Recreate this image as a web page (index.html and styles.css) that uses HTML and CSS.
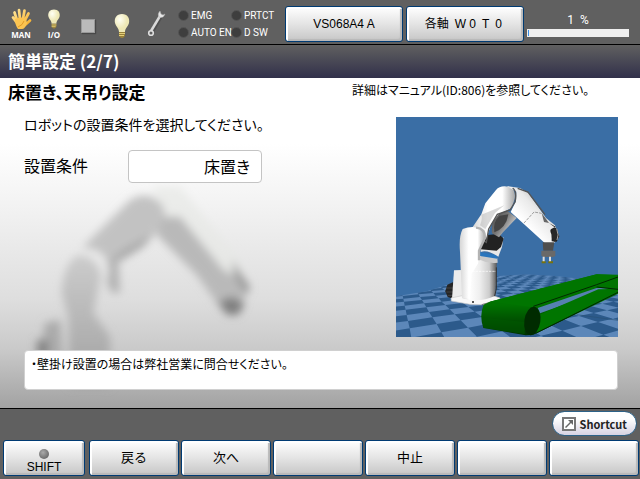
FILE: index.html
```html
<!DOCTYPE html>
<html lang="ja">
<head>
<meta charset="utf-8">
<title>簡単設定</title>
<link rel="stylesheet" href="styles.css">
</head>
<body>
<header class="status">
  <div class="tools">
    <div class="tool">
      <svg width="22" height="22" viewBox="0 0 22 22" aria-hidden="true">
        <defs><linearGradient id="skin" x2="1" y2="1"><stop stop-color="#ffe79b"/><stop offset="1" stop-color="#f7ae2a"/></linearGradient></defs>
        <g stroke="url(#skin)" stroke-width="2.7" stroke-linecap="round" fill="none"><path d="M7 12 4.5 4.500M10 11 9 2M13 11 14.500 2.500M15 12 18.500 5.500M15 17 20 12.500M7 15 3 9.500"/></g>
        <path d="M5 11Q11 8 16 11L17 15Q15 21 12 21H8Q5 17 5 11Z" fill="#fbc451"/>
        <path d="M8 19Q13 17 14 13" fill="none" stroke="#e29a25"/>
      </svg>
      <span>MAN</span>
    </div>
    <div class="tool">
      <svg width="16" height="22" viewBox="0 0 20 26" aria-hidden="true">
        <defs><radialGradient id="glass" cx=".35" cy=".3"><stop stop-color="#fffff4"/><stop offset="1" stop-color="#eee8b5"/></radialGradient></defs>
        <g id="bulb"><path d="M10 1C4.500 1 2 5 3 10C4 14 7 15 7 19H13C13 15 16 14 17 10C18 5 15.500 1 10 1Z" fill="url(#glass)"/><path d="M7 19H13V23L11 25H9L7 23Z" fill="#97803a"/><path d="M7 20.500H13M7 22.500H12" stroke="#e4cf7a"/></g>
      </svg>
      <span>I/O</span>
    </div>
    <div class="stop"></div>
    <svg class="lamp" width="22" height="26" viewBox="0 0 20 26" aria-hidden="true"><use href="#bulb"/></svg>
    <svg class="wrench" width="20" height="28" viewBox="0 0 20 28" aria-hidden="true">
      <path d="M5 22 14 6" stroke="#383838" stroke-width="4" opacity=".4"/>
      <path d="M4 21 13 6" stroke="#d9d9d9" stroke-width="2.500"/>
      <path d="M13 1Q10 4 12 7Q16 9 18 4L16 5 14 4Z" fill="#e6e6e6" stroke="#aaa" stroke-width=".5"/>
      <circle cx="4" cy="23" r="2.300" fill="none" stroke="#dedede" stroke-width="1.600"/>
    </svg>
  </div>
  <ul class="signals">
    <li>EMG</li><li>PRTCT</li><li>AUTO EN</li><li>D SW</li>
  </ul>
  <button class="key mode">VS068A4 A</button>
  <button class="key mode">各軸&ensp;W<span class="wide">0</span><span class="wide">T</span><span class="wide">0</span></button>
  <div class="speed">
    <label for="speed">1&ensp;%</label>
    <progress id="speed" value="1" max="100"></progress>
  </div>
</header>
<h1>簡単設定 (2/7)</h1>
<main>
  <svg class="backdrop" width="300" height="240" viewBox="0 0 900 720" aria-hidden="true">
    <defs>
      <filter id="soft"><feGaussianBlur stdDeviation="12"/></filter>
      <linearGradient id="shade" x2="0" y2="1"><stop stop-color="#cdcdcd"/><stop offset="1" stop-color="#a0a0a0"/></linearGradient>
    </defs>
    <g filter="url(#soft)">
      <path d="M455 20 540 20 710 230 745 310 700 370 520 150Z" fill="#e7e8e6" opacity=".7"/>
      <path d="M250 200 390 60Q450 25 490 80L500 130 440 180 350 250 345 340 310 300Z" fill="#c2c2c2"/>
      <path d="M465 160 380 205 330 240 365 240 430 200Z" fill="#a5a5a5"/>
      <path d="M470 165 490 110 540 110 670 270 745 310 735 345 720 395 665 390 590 285Z" fill="#b9b9b9"/>
      <path d="M655 365 695 350 735 370 715 405 680 405Z" fill="#808080"/>
      <path d="M695 240 750 320 740 345 705 290Z" fill="#979797"/>
      <path d="M320 245 355 240 360 340 330 335Z" fill="#b3b3b3"/>
      <path d="M245 220Q310 230 300 300L280 400 330 470 330 620H210L205 410 185 340Q190 240 245 220Z" fill="url(#shade)"/>
      <path d="M240 205Q330 200 325 285L310 310Q300 230 240 225Z" fill="#e9e9e9"/>
      <path d="M135 430 180 420 190 600 110 600Z" fill="#aaa"/>
      <path d="M110 480H145V530H110Z" fill="#858585"/>
    </g>
  </svg>
  <section class="setup">
    <div class="form">
      <h2>床置き、天吊り設定</h2>
      <p class="prompt">ロボットの設置条件を選択してください。</p>
      <div class="field">
        <label for="mount">設置条件</label>
        <input id="mount" type="text" value="床置き" readonly>
      </div>
    </div>
    <div class="guide">
      <p>詳細はマニュアル(ID:806)を参照してください。</p>
      <svg class="scene" width="222" height="220" viewBox="18 15 666 660" role="img" aria-label="床置きのロボット">
        <defs>
          <clipPath id="ground"><path d="M18 553 110 538 215 505 320 492 410 487 500 492 570 500 684 493V675H18Z"/></clipPath>
          <linearGradient id="col"><stop stop-color="#c4c4c4"/><stop offset=".2" stop-color="#fff"/><stop offset=".5" stop-color="#efefef"/><stop offset=".78" stop-color="#ccc"/><stop offset="1" stop-color="#555"/></linearGradient>
          <linearGradient id="upper"><stop stop-color="#d5d5d5"/><stop offset=".35" stop-color="#fff"/><stop offset=".7" stop-color="#fff"/><stop offset="1" stop-color="#a6a6a6"/></linearGradient>
          <linearGradient id="dark" x2="1" y2=".7"><stop stop-color="#444"/><stop offset=".5" stop-color="#777"/><stop offset="1" stop-color="#eee"/></linearGradient>
          <linearGradient id="fore" x1="1" y1="0" x2="0" y2="1"><stop stop-color="#777"/><stop offset=".42" stop-color="#e9e9e9"/><stop offset=".65" stop-color="#fff"/></linearGradient>
          <linearGradient id="belt" x2="0" y2="1"><stop stop-color="#007500"/><stop offset=".5" stop-color="#007200"/><stop offset="1" stop-color="#002f00"/></linearGradient>
        </defs>
        <path d="M18 15H684V675H18Z" fill="#3a6ea5"/>
        <g clip-path="url(#ground)"><path d="M18 480H684V675H18Z" fill="#5c87b9"/><path id="tiles" fill="#2c5a8b"/></g>
        <path d="M560 608 684 625" stroke="#285277" stroke-width="2"/>
        <path d="M190 510 172 518 166 538 173 555 190 560Z" fill="#252525"/>
        <path d="M169 528H190M169 540H190M173 550H190" stroke="#555" stroke-width="2"/>
        <path d="M192 475 216 474V561H186Z" fill="#ececec"/>
        <path d="M183 558 216 551 300 548 330 558 326 565 275 578 240 577 184 567Z" fill="#f8f8f8" stroke="#ccc" stroke-width="2"/>
        <circle cx="249" cy="570" r="3" fill="#222"/><path d="M275 578 328 564" stroke="#777" stroke-width="3"/>
        <path d="M216 425Q270 418 321 442L316 551Q265 574 216 558Z" fill="url(#col)"/>
        <path d="M270 443Q265 428 288 428L322 438 323 452Q295 456 270 443Z" fill="#c9c9c9"/>
        <path d="M268 420 322 430V440L270 432Z" fill="#2875bd"/>
        <path d="M272 408 320 413 341 374 336 405 325 434Q292 412 272 420Z" fill="#e8e8e8"/>
        <path d="M271 412 288 370 326 365 341 380 333 405 320 416Z" fill="#222"/>
        <path d="M319 466V530L314 552" fill="none" stroke="#333" stroke-width="3"/>
        <path d="M247 478H318" stroke="#fff" stroke-width="2" stroke-dasharray="7 3"/>
        <path d="M306 364Q302 326 324 306L350 295 380 318 339 361 327 376Z" fill="url(#dark)"/>
        <path d="M313 361Q308 328 329 311L355 307Q349 348 313 361Z" fill="#444"/>
        <path d="M248 345 274 307 286 274 318 234Q330 219 355 224Q379 229 374 261L365 288 326 307 305 334 288 382Q281 345 248 345Z" fill="url(#upper)"/>
        <path d="M350 222 390 228 415 243 468 318 495 340 507 374 492 394 465 394 362 300 378 267 379 239Z" fill="url(#fore)"/>
        <path d="M368 228Q382 238 375 270L360 294 322 307 296 351 289 391 275 383 281 356" fill="none" stroke="#555" stroke-width="4"/>
        <path d="M274 308Q278 320 270 340L286 351 315 303 343 280Z" fill="#aaa" opacity=".45"/>
        <path d="M383 229 414 240 465 308" stroke="#555" stroke-width="4" fill="none"/>
        <path d="M402 333 432 300 455 304" stroke="#777" stroke-width="2" stroke-dasharray="9 3" fill="none"/>
        <path d="M455 303 477 333 462 330Z" fill="#666"/>
        <path d="M477 333 497 344 485 350Q477 353 485 368L485 388 500 389 508 373 500 350Z" fill="#222"/>
        <ellipse cx="494" cy="369" rx="9" ry="20" fill="#282828"/><path d="M500 350Q508 370 501 384" fill="none" stroke="#aaa" stroke-width="3"/>
        <path d="M218 351Q245 340 272 349Q287 355 286 379L266 417 267 450 245 485 240 561 216 558 210 420Q206 373 218 351Z" fill="url(#upper)"/>
        <path d="M258 347Q286 350 285 378L267 416V445" stroke="#b3b3b3" stroke-width="7" fill="none"/>
        <path d="M458 391H493L489 416H460Z" fill="#4e4e4e"/><path d="M454 416H496V432L488 435H460L454 431Z" fill="#696969"/>
        <path d="M461 434V450M480 434V450" stroke="#ddd" stroke-width="6"/><path d="M455 448H467V454H455ZM475 448H489V454H475Z" fill="#77720b"/>
        <path d="M299 569 620 487 684 490V545L430 668 407 670 280 648Q267 610 281 578Z" fill="url(#belt)"/>
        <path d="M299 569 620 487 684 488V500L620 518 430 586Z" fill="#007500"/>
        <path d="M443 588 622 527 655 530 450 604Z" fill="#5681b0"/>
        <path d="M452 607 625 532 684 531V541L437 664Z" fill="#007500"/>
        <path d="M430 583 620 518 684 495M620 525 684 532M437 664 684 541" fill="none" stroke="#002900" stroke-width="3"/>
        <path d="M280 617 404 630V667L281 647Q275 635 280 617Z" fill="#005900" opacity=".6"/>
        <ellipse cx="427" cy="627" rx="24" ry="43" transform="rotate(8 427 627)" fill="#002b00"/>
      </svg>
    </div>
  </section>
  <p class="note">・壁掛け設置の場合は弊社営業に問合せください。</p>
</main>
<footer>
  <button class="shortcut">
    <svg width="14" height="14" viewBox="0 0 14 14" aria-hidden="true"><path d="M1 1H13V13H1Z" fill="#fff" stroke="#777" stroke-width="2"/><path d="M6 3H11V8L9 6 4 11 3 10 8 5Z" fill="#666"/></svg>
    Shortcut
  </button>
  <nav>
    <button class="key shift"><i></i>SHIFT</button>
    <button class="key">戻る</button>
    <button class="key">次へ</button>
    <button class="key" aria-label="F3"></button>
    <button class="key">中止</button>
    <button class="key" aria-label="F5"></button>
    <button class="key" aria-label="F6"></button>
  </nav>
</footer>
<script src="floor.js"></script>
</body>
</html>
```
FILE: styles.css
```css
* { box-sizing: border-box; }
body {
  margin: 0;
  min-height: 100vh;
  display: flex;
  flex-direction: column;
  background: #606060;
  color: #000;
  font-family: "Liberation Sans", "Noto Sans CJK JP", sans-serif;
  font-size: 13px;
}
h1, h2, p, ul { margin: 0; padding: 0; }
button, input { font: inherit; color: inherit; }

.status {
  display: flex;
  align-items: center;
  padding: 6px 11px 2px 10px;
  border-bottom: 1px solid #000;
  color: #fff;
}
.tools { display: flex; flex: 1; align-items: center; gap: 16px; }
.tool {
  width: 22px;
  display: flex;
  flex-direction: column;
  align-items: center;
  font: bold 8px/10px "Open Sans", sans-serif;
}
.tool + .tool { margin-left: -5px; }
.stop { width: 14px; height: 14px; margin-top: 4px; background: #bababa; border: 1px solid #999; box-shadow: 1px 1px 1px #484848; }
.tools .lamp { margin-top: 4px; }
.tools .wrench { margin-left: -2px; }
.signals {
  display: grid;
  grid-template-columns: 53px 48px;
  margin-right: 6px;
  list-style: none;
  font: 10px/17px Roboto, sans-serif;
  white-space: nowrap;
}
.signals li { display: flex; align-items: center; gap: 2px; }
.signals li::before {
  content: "";
  flex: none;
  width: 9px;
  height: 9px;
  border: 1px solid #555;
  border-radius: 50%;
  background: #3e3e3e;
}

.key {
  min-width: 0;
  height: 36px;
  padding: 0 4px;
  border: 1px solid #003b73;
  border-radius: 3px;
  background: linear-gradient(#fff, #e4e4e4 50%, #c6c6c6);
  box-shadow: inset 2px 2px 0 #fff, inset -2px -2px 1px #b9b9b9;
  font-size: 13px;
  line-height: 18px;
  white-space: nowrap;
}
.mode { width: 118px; margin-right: 3px; color: #000; font-size: 12px; }
.wide { display: inline-block; width: 13px; text-align: center; }
.speed { width: 102px; text-align: center; font: 12px/18px Roboto, sans-serif; }
.speed label { display: block; }
progress { display: block; width: 100%; height: 8px; appearance: none; border: 0; }
progress::-webkit-progress-bar { background: #efefef; padding: 1px; }
progress::-webkit-progress-value { background: #3a91e8; }

h1 {
  padding: 4px 8px 5px;
  background: linear-gradient(#606060, #31304a);
  color: #fff;
  font: bold 17px/24px "Noto Sans CJK JP", sans-serif;
}
main {
  position: relative;
  flex: 1;
  display: flex;
  flex-direction: column;
  padding: 3px 22px 0 24px;
  border-bottom: 1px solid #000;
  background: linear-gradient(#fff 20%, #f5f5f5 35%, #dedede 67%, #cacaca 82%, #a2a2a2);
  font-family: "Noto Sans CJK JP", sans-serif;
  font-feature-settings: "palt";
}
.backdrop { position: absolute; left: 0; top: 102px; }
.setup { position: relative; display: flex; justify-content: space-between; }
h2 { margin-left: -16px; font-size: 17px; line-height: 22px; }
.prompt { margin: 10px 0 12px; font-size: 14px; line-height: 22px; }
.field { display: flex; align-items: center; gap: 40px; font-size: 16px; }
.field input {
  width: 134px;
  height: 33px;
  padding: 0 11px 2px;
  border: 1px solid #c4c4c4;
  border-radius: 4px;
  background: #fff;
  text-align: right;
}
.field label { line-height: 37px; padding-bottom: 2px; }
.guide { width: 266px; font-size: 12px; line-height: 18px; }
.scene { display: block; margin: 18px 0 0 44px; }
.note {
  position: relative;
  min-height: 40px;
  margin-top: 13px;
  padding: 4px 6px;
  border: 1px solid #d0d0d0;
  border-radius: 4px;
  background: #fff;
  font-size: 12px;
  line-height: 18px;
}

footer { display: flex; flex-direction: column; padding: 2px 1px 3px 3px; gap: 4px; }
.shortcut {
  align-self: flex-end;
  display: flex;
  align-items: center;
  gap: 4px;
  height: 25px;
  margin-right: 2px;
  padding: 0 9px;
  border: 1px solid #2d6288;
  border-radius: 13px;
  background: linear-gradient(#fff 30%, #d6d2e2);
  color: #222;
  font: bold 11px/16px "Noto Sans CJK JP", sans-serif;
}
nav { display: grid; grid-template-columns: 84fr repeat(6, 90fr); gap: 2px; }
.shift {
  display: flex;
  flex-direction: column;
  align-items: center;
  justify-content: flex-end;
  margin-right: 2px;
  font-size: 12px;
  line-height: 16px;
}
.shift i { width: 10px; height: 10px; border-radius: 50%; background: radial-gradient(circle at 40% 35%, #aaa, #555); }
```
FILE: floor.js
```js
// Checkered floor projected towards the horizon of the scene.
const side = 0.14;
const angle = 0.5;
const project = (i, j) => {
  const x = (i * Math.cos(angle) - j * Math.sin(angle)) * side;
  const z = 2.2 + (i * Math.sin(angle) + j * Math.cos(angle)) * side;
  return [350 + 620 * x / z, 425 + 250 / z, z];
};
let d = "";
for (let i = -30; i < 30; i++) {
  for (let j = -30; j < 30; j++) {
    if ((i + j) % 2) continue;
    const tile = [project(i, j), project(i + 1, j), project(i + 1, j + 1), project(i, j + 1)];
    if (tile.some(p => p[2] < 0.7)) continue;
    d += "M" + tile.map(p => p[0].toFixed() + " " + p[1].toFixed()).join("L") + "Z";
  }
}
document.getElementById("tiles").setAttribute("d", d);
```
